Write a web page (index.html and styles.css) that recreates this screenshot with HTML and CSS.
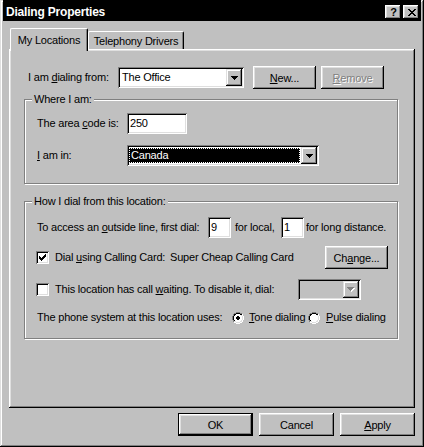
FILE: index.html
```html
<!DOCTYPE html>
<html>
<head>
<meta charset="utf-8">
<title>Dialing Properties</title>
<link rel="stylesheet" href="styles.css">
</head>
<body>
<div class="window">
  <div class="titlebar">
    <span class="title">Dialing Properties</span>
    <div class="caption-btns">
      <span class="cbtn help">?</span>
      <span class="cbtn close"><svg width="8" height="7" viewBox="0 0 8 7"><path d="M0 0h2v1H0zM6 0h2v1H6zM1 1h2v1H1zM5 1h2v1H5zM2 2h4v1H2zM3 3h2v1H3zM2 4h4v1H2zM1 5h2v1H1zM5 5h2v1H5zM0 6h2v1H0zM6 6h2v1H6z" fill="#000"/></svg></span>
    </div>
  </div>
  <div class="content">
    <div class="tabs">
      <div class="tab active">My Locations</div>
      <div class="tab inactive">Telephony Drivers</div>
    </div>
    <div class="panel">
      <div class="row from-row">
        <span class="lbl from-lbl">I am <u>d</u>ialing from:</span>
        <div class="combo office">
          <div class="combo-val">The Office</div>
          <div class="combo-btn"><svg width="7" height="4" viewBox="0 0 7 4"><path d="M0 0h7v1H0zM1 1h5v1H1zM2 2h3v1H2zM3 3h1v1H3z" fill="#000"/></svg></div>
        </div>
        <button class="btn small new"><u>N</u>ew...</button>
        <button class="btn small remove" disabled><u>R</u>emove</button>
      </div>

      <fieldset class="group g1">
        <legend>Where I am:</legend>
        <div class="row area-row">
          <span class="lbl w90">The area <u>c</u>ode is:</span>
          <div class="edit area">250</div>
        </div>
        <div class="row country-row">
          <span class="lbl w90"><u>I</u> am in:</span>
          <div class="combo country">
            <div class="combo-val selected"><span>Canada</span></div>
            <div class="combo-btn"><svg width="7" height="4" viewBox="0 0 7 4"><path d="M0 0h7v1H0zM1 1h5v1H1zM2 2h3v1H2zM3 3h1v1H3z" fill="#000"/></svg></div>
          </div>
        </div>
      </fieldset>

      <fieldset class="group g2">
        <legend>How I dial from this location:</legend>
        <div class="row dial-row">
          <span class="lbl access-lbl">To access an <u>o</u>utside line, first dial:</span>
          <div class="edit digit">9</div>
          <span class="lbl local-lbl">for local,</span>
          <div class="edit digit">1</div>
          <span class="lbl long-lbl">for long distance.</span>
        </div>
        <div class="row card-row">
          <span class="check"><svg width="7" height="7" viewBox="0 0 7 7"><path d="M6 0h1v1H6zM5 1h2v1H5zM0 2h1v1H0zM4 2h3v1H4zM0 3h2v1H0zM3 3h3v1H3zM0 4h5v1H0zM1 5h3v1H1zM2 6h1v1H2z" fill="#000"/></svg></span>
          <span class="lbl card-lbl">Dial <u>u</u>sing Calling Card:</span>
          <span class="lbl card-name">Super Cheap Calling Card</span>
          <button class="btn small change">Ch<u>a</u>nge...</button>
        </div>
        <div class="row wait-row">
          <span class="check"></span>
          <span class="lbl wait-lbl">This location has call <u>w</u>aiting. To disable it, dial:</span>
          <div class="combo disabled-combo">
            <div class="combo-val"></div>
            <div class="combo-btn"><svg width="8" height="5" viewBox="0 0 8 5"><path d="M1 1h7v1H1zM2 2h5v1H2zM3 3h3v1H3zM4 4h1v1H4z" fill="#fff"/><path d="M0 0h7v1H0zM1 1h5v1H1zM2 2h3v1H2zM3 3h1v1H3z" fill="#808080"/></svg></div>
          </div>
        </div>
        <div class="row radio-row">
          <span class="lbl phone-lbl">The phone system at this location uses:</span>
          <span class="radio"><svg width="12" height="12" viewBox="0 0 12 12"><path d="M4 0h4v1H4zM2 1h2v1H2zM8 1h2v1H8zM1 2h1v2H1zM0 4h1v4H0zM1 8h1v2H1z" fill="#808080"/><path d="M10 2h1v2h-1zM11 4h1v4h-1zM10 8h1v2h-1zM8 10h2v1H8zM2 10h2v1H2zM4 11h4v1H4z" fill="#fff"/><path d="M4 1h4v1H4zM2 2h2v1H2zM8 2h2v1H8zM2 3h1v1H2zM1 4h1v4H1zM2 8h1v1H2z" fill="#000"/><path d="M9 3h1v1H9zM10 4h1v4h-1zM9 8h1v1H9zM8 9h2v1H8zM2 9h2v1H2zM4 10h4v1H4z" fill="#dfdfdf"/><path d="M4 2h4v1H4zM3 3h6v1H3zM2 4h8v4H2zM3 8h6v1H3zM4 9h4v1H4z" fill="#fff"/><path d="M5 4h2v1H5zM4 5h4v2H4zM5 7h2v1H5z" fill="#000"/></svg></span>
          <span class="lbl tone-lbl"><u>T</u>one dialing</span>
          <span class="radio"><svg width="12" height="12" viewBox="0 0 12 12"><path d="M4 0h4v1H4zM2 1h2v1H2zM8 1h2v1H8zM1 2h1v2H1zM0 4h1v4H0zM1 8h1v2H1z" fill="#808080"/><path d="M10 2h1v2h-1zM11 4h1v4h-1zM10 8h1v2h-1zM8 10h2v1H8zM2 10h2v1H2zM4 11h4v1H4z" fill="#fff"/><path d="M4 1h4v1H4zM2 2h2v1H2zM8 2h2v1H8zM2 3h1v1H2zM1 4h1v4H1zM2 8h1v1H2z" fill="#000"/><path d="M9 3h1v1H9zM10 4h1v4h-1zM9 8h1v1H9zM8 9h2v1H8zM2 9h2v1H2zM4 10h4v1H4z" fill="#dfdfdf"/><path d="M4 2h4v1H4zM3 3h6v1H3zM2 4h8v4H2zM3 8h6v1H3zM4 9h4v1H4z" fill="#fff"/></svg></span>
          <span class="lbl pulse-lbl"><u>P</u>ulse dialing</span>
        </div>
      </fieldset>
    </div>
    <div class="footer">
      <button class="btn dlg default">OK</button>
      <button class="btn dlg">Cancel</button>
      <button class="btn dlg"><u>A</u>pply</button>
    </div>
  </div>
</div>
</body>
</html>
```

FILE: styles.css
```css
* { box-sizing: border-box; }

html, body {
  margin: 0;
  padding: 0;
  background: #c0c0c0;
}

body {
  font-family: "Liberation Sans", Arial, sans-serif;
  font-size: 11px;
  letter-spacing: -0.2px;
  color: #000;
}

u { text-decoration: underline; text-underline-offset: 1px; }

.window {
  width: 424px;
  height: 447px;
  background: #c0c0c0;
  padding: 0 2px 2px 2px;
  box-shadow: inset -1px -1px #000, inset 1px 1px #dfdfdf, inset -2px -2px #808080, inset 2px 2px #fff;
}

/* Title bar */
.titlebar {
  margin: 0 1px;
  height: 21px;
  background: #000;
  color: #fff;
  display: flex;
  align-items: flex-start;
  justify-content: space-between;
  padding: 0 2px 0 3px;
}

.title {
  font-weight: bold;
  font-size: 12px;
  letter-spacing: -0.2px;
  line-height: 17px;
  padding-top: 4px;
}

.caption-btns {
  display: flex;
  gap: 2px;
  margin-top: 5px;
}

.cbtn {
  width: 16px;
  height: 14px;
  background: #c0c0c0;
  color: #000;
  display: flex;
  align-items: center;
  justify-content: center;
  box-shadow: inset -1px -1px #000, inset 1px 1px #fff, inset -2px -2px #808080, inset 2px 2px #dfdfdf;
}

.cbtn.help {
  font-weight: bold;
  font-size: 11px;
  line-height: 14px;
  letter-spacing: 0;
  padding-left: 1px;
}

.cbtn.close svg { display: block; margin-left: 1px; }

/* Content */
.content {
  padding: 0 7px;
}

.tabs {
  margin-top: 7px;
  height: 21px;
  display: flex;
  align-items: flex-start;
  padding-left: 1px;
}

.tab {
  background: #c0c0c0;
  border-top: 1px solid #fff;
  border-left: 1px solid #fff;
  border-right: 1px solid #000;
  border-radius: 2px 2px 0 0;
  box-shadow: inset -1px 0 #808080;
  text-align: center;
}

.tab.active {
  width: 78px;
  height: 23px;
  position: relative;
  z-index: 1;
  line-height: 20px;
  padding-top: 1px;
}

.tab.inactive {
  width: 96px;
  height: 18px;
  margin-top: 3px;
  line-height: 17px;
  padding-top: 1px;
}

.panel {
  width: 406px;
  height: 359px;
  padding-left: 15px;
  padding-top: 17px;
  box-shadow: inset -1px -1px #000, inset 1px 1px #fff, inset -2px -2px #808080, inset 2px 2px #dfdfdf;
}

.row {
  display: flex;
  align-items: center;
}

.lbl {
  white-space: nowrap;
  line-height: 13px;
  flex: none;
}

.from-row {
  height: 23px;
  margin-left: 4px;
}

.from-lbl { width: 90px; }

/* Combo boxes */
.combo {
  height: 21px;
  padding: 2px;
  background: #fff;
  display: flex;
  flex: none;
  box-shadow: inset 1px 1px #808080, inset -1px -1px #fff, inset 2px 2px #000, inset -2px -2px #dfdfdf;
}

.combo-val {
  flex: 1;
  line-height: 17px;
  padding-left: 2px;
  white-space: nowrap;
}

.combo-btn {
  width: 16px;
  height: 17px;
  background: #c0c0c0;
  display: flex;
  align-items: center;
  justify-content: center;
  box-shadow: inset -1px -1px #000, inset 1px 1px #dfdfdf, inset -2px -2px #808080, inset 2px 2px #fff;
}

.combo-btn svg { display: block; }

.combo.office { width: 126px; }

.combo.country { width: 192px; }

.combo-val.selected {
  margin: 1px 1px 1px 0;
  background: #000;
  color: #fff;
  line-height: 15px;
  padding-left: 2px;
  outline: 1px dotted #fff;
  outline-offset: -1px;
}

.combo.disabled-combo {
  width: 63px;
  background: #c0c0c0;
}

/* Buttons */
.btn {
  border: 0;
  margin: 0;
  padding: 0;
  background: #c0c0c0;
  font: inherit;
  color: #000;
  letter-spacing: -0.2px;
  flex: none;
  box-shadow: inset -1px -1px #000, inset 1px 1px #fff, inset -2px -2px #808080, inset 2px 2px #dfdfdf;
}

.btn.small {
  width: 63px;
  height: 23px;
}

.btn.new { margin-left: 9px; }
.btn.remove { margin-left: 5px; }

.btn:disabled {
  color: #808080;
  text-shadow: 1px 1px #fff;
}

/* Group boxes */
.group {
  margin: 0;
  width: 374px;
  border: 1px solid #808080;
  box-shadow: inset 1px 1px #fff, 1px 1px #fff;
  padding: 0 0 0 7px;
  min-inline-size: 0;
}

.group legend {
  padding: 0 2px;
  line-height: 13px;
  background: #c0c0c0;
}

.g1 {
  margin-top: 4px;
  padding-bottom: 17px;
}

.g2 {
  margin-top: 11px;
  padding-bottom: 14px;
}

.area-row {
  margin-top: 7px;
  margin-left: 5px;
  height: 21px;
}

.country-row {
  margin-top: 11px;
  margin-left: 5px;
  height: 21px;
}

.w90 { width: 90px; }

.edit {
  height: 21px;
  background: #fff;
  line-height: 17px;
  padding: 2px 0 0 3px;
  flex: none;
  box-shadow: inset 1px 1px #808080, inset -1px -1px #fff, inset 2px 2px #000, inset -2px -2px #dfdfdf;
}

.edit.area { width: 60px; }
.edit.digit { width: 23px; }

.dial-row {
  margin-top: 9px;
  margin-left: 5px;
  height: 21px;
}

.access-lbl { width: 171px; }
.local-lbl { width: 50px; padding-left: 4px; }
.long-lbl { padding-left: 2px; }

.card-row {
  margin-top: 8px;
  margin-left: 4px;
  height: 23px;
}

.check {
  width: 13px;
  height: 13px;
  background: #fff;
  flex: none;
  display: flex;
  align-items: center;
  justify-content: center;
  box-shadow: inset 1px 1px #808080, inset -1px -1px #fff, inset 2px 2px #000, inset -2px -2px #dfdfdf;
}

.check svg { display: block; }

.card-lbl { width: 115px; margin-left: 6px; }
.card-name { width: 155px; }

.wait-row {
  margin-top: 10px;
  margin-left: 4px;
  height: 21px;
}

.wait-lbl { width: 243px; margin-left: 6px; }

.radio-row {
  margin-top: 11px;
  margin-left: 5px;
  height: 13px;
}

.phone-lbl { width: 195px; }

.radio {
  width: 12px;
  height: 12px;
  flex: none;
}

.radio svg { display: block; }

.tone-lbl { width: 64px; padding-left: 5px; }
.pulse-lbl { padding-left: 6px; }

/* Footer */
.footer {
  margin-top: 5px;
  display: flex;
  justify-content: flex-end;
  gap: 6px;
}

.btn.dlg {
  width: 75px;
  height: 23px;
}

.btn.default {
  box-shadow: inset 0 0 0 1px #000, inset -2px -2px #000, inset 2px 2px #fff, inset -3px -3px #808080, inset 3px 3px #dfdfdf;
}
```
